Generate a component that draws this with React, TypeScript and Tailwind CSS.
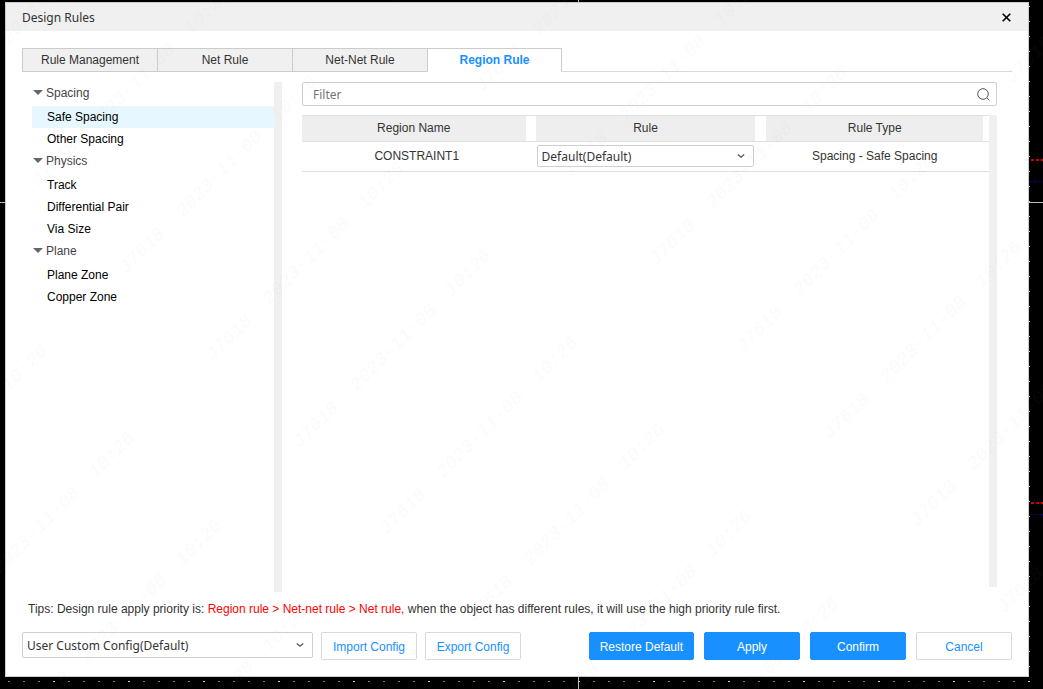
import { useState } from "react";
import type { ReactNode } from "react";
import clsx from "clsx";

const TABS = ["Rule Management", "Net Rule", "Net-Net Rule", "Region Rule"];

const GROUPS = [
  { name: "Spacing", items: ["Safe Spacing", "Other Spacing"] },
  { name: "Physics", items: ["Track", "Differential Pair", "Via Size"] },
  { name: "Plane", items: ["Plane Zone", "Copper Zone"] },
];

const COLUMNS = [
  { title: "Region Name", width: "w-[34%]", pad: "pr-[10px]" },
  { title: "Rule", width: "w-[33.6%]", pad: "pr-[11px]" },
  { title: "Rule Type", width: "w-auto", pad: "pr-[6px]" },
];

const Board = () => (
  <svg className="absolute inset-0 h-full w-full" aria-hidden="true">
    <defs>
      <pattern id="dots" x="8" y="6" width="75" height="15" patternUnits="userSpaceOnUse">
        <rect x="0" y="0" width="2" height="1" fill="#777" />
        <rect x="15" y="0" width="2" height="1" fill="#777" />
        <rect x="30" y="0" width="2" height="1" fill="#777" />
        <rect x="45" y="0" width="2" height="1" fill="#ccc" />
        <rect x="60" y="0" width="2" height="1" fill="#777" />
      </pattern>
    </defs>
    <rect width="100%" height="100%" fill="#000" />
    <rect width="100%" height="100%" fill="url(#dots)" />
    <g fill="none" shapeRendering="crispEdges">
      <path d="M578.5 0V2000M0 202.5H3000" stroke="#bbb" />
      <path d="M1031 160H3000M1031 503H3000" stroke="#d00000" strokeWidth="2" strokeDasharray="3 2" />
      <path d="M1029 181.5H3000M1031 514.5H3000" stroke="#000080" strokeDasharray="3 2" />
    </g>
  </svg>
);

const Watermark = () => (
  <svg className="pointer-events-none absolute inset-0 h-full w-full" aria-hidden="true">
    <defs>
      <pattern
        id="stamp"
        x="-120"
        y="0"
        width="381"
        height="123"
        patternUnits="userSpaceOnUse"
        patternTransform="rotate(-45)"
      >
        <g
          fill="#808080"
          fillOpacity="0.045"
          fontFamily="'Liberation Mono', monospace"
          fontStyle="italic"
          fontSize="19"
          textAnchor="middle"
        >
          <text x="43" y="37">J7618</text>
          <text x="152" y="37">2023-11-08</text>
          <text x="258" y="37">10:26</text>
        </g>
      </pattern>
    </defs>
    <rect width="100%" height="100%" fill="url(#stamp)" />
  </svg>
);

const Chevron = () => (
  <svg
    className="pointer-events-none absolute top-1/2 right-[9px] h-2 w-2 -translate-y-1/2"
    viewBox="0 0 8 8"
    fill="none"
    stroke="#555"
    strokeWidth="1.3"
  >
    <path d="M0.8 2.4 4 5.2 7.2 2.4" />
  </svg>
);

type SelectProps = {
  label: string;
  value: string;
  className: string;
};

const Select = ({ label, value, className }: SelectProps) => (
  <div className={clsx("relative", className)}>
    <select
      aria-label={label}
      className="h-full w-full appearance-none rounded-xs border border-[#d0d0d0] bg-white pt-[2px] pr-6 pl-1 font-['Noto_Sans',sans-serif] text-xs text-[#333]"
    >
      <option>{value}</option>
    </select>
    <Chevron />
  </div>
);

type ButtonProps = {
  children: ReactNode;
  primary?: boolean;
};

const Button = ({ children, primary }: ButtonProps) => (
  <button
    type="button"
    className={clsx(
      "h-7 min-w-24 rounded-xs border px-[10px] pt-[1px] whitespace-nowrap",
      primary
        ? "border-[#1890ff] bg-[#1890ff] font-medium text-white"
        : "border-[#d9d9d9] bg-white text-[#1890ff]"
    )}
  >
    {children}
  </button>
);

const RuleTree = () => {
  const [selected, setSelected] = useState("Safe Spacing");

  return (
    <nav className="flex w-[260px] shrink-0">
      <div className="flex-1 pl-[10px]">
        {GROUPS.map((group) => (
          <section key={group.name}>
            <h2 className="flex h-6 items-center gap-[3px] pb-[3px] pl-[1px] text-[#444]">
              <svg className="h-[5px] w-[10px]" viewBox="0 0 10 5" fill="#666">
                <path d="M0 0H10L5 5Z" />
              </svg>
              {group.name}
            </h2>
            <ul>
              {group.items.map((item) => (
                <li key={item}>
                  <button
                    type="button"
                    onClick={() => setSelected(item)}
                    className={clsx(
                      "block h-[22px] w-full pl-[15px] text-left text-black",
                      selected === item && "bg-[#e6f7ff]"
                    )}
                  >
                    {item}
                  </button>
                </li>
              ))}
            </ul>
          </section>
        ))}
      </div>
      <div className="w-2 bg-[#f0f0f0]" />
    </nav>
  );
};

const RuleTable = () => (
  <div className="flex flex-1">
    <div className="flex-1">
      <table className="w-full table-fixed border-collapse text-center text-[#333]">
        <thead>
          <tr className="border-y border-[#e0e0e0]">
            {COLUMNS.map((column) => (
              <th key={column.title} className={clsx("p-0 font-normal", column.width, column.pad)}>
                <div className="h-[25px] bg-[#eee] leading-6">{column.title}</div>
              </th>
            ))}
          </tr>
        </thead>
        <tbody>
          <tr className="h-[30px] border-b border-[#ddd]">
            <td className="p-0 pr-1 pb-[2px]">CONSTRAINT1</td>
            <td className="p-0 pr-3 pb-[2px] pl-[1px]">
              <Select label="Rule" value="Default(Default)" className="h-[22px] text-left" />
            </td>
            <td className="p-0 pr-[6px] pb-[2px]">Spacing - Safe Spacing</td>
          </tr>
        </tbody>
      </table>
    </div>
    <div className="w-2 bg-[#f0f0f0]" />
  </div>
);

export default function App() {
  const [tab, setTab] = useState("Region Rule");

  return (
    <main className="relative flex min-h-screen flex-col bg-black pt-[2px] pr-[14px] pb-3 pl-[5px] font-['Liberation_Sans',Arial,sans-serif] text-xs">
      <Board />
      <div role="dialog" aria-label="Design Rules" className="relative flex flex-1 flex-col border border-[#ccc] bg-white">
        <header className="flex h-7 items-center justify-between bg-[#f0f0f0] px-4">
          <h1 className="pt-[2px] font-['Noto_Sans',sans-serif] text-[#333]">Design Rules</h1>
          <button type="button" aria-label="Close" className="flex h-5 w-3 items-center justify-center">
            <svg className="h-[9px] w-[9px]" viewBox="0 0 9 9" stroke="#000" strokeWidth="1.6">
              <path d="M0.7 0.7 8.3 8.3M8.3 0.7 0.7 8.3" />
            </svg>
          </button>
        </header>

        <div className="flex flex-1 flex-col px-4 pt-[17px] pb-4">
          <div role="tablist" className="flex h-6">
            {TABS.map((name) => (
              <button
                key={name}
                type="button"
                role="tab"
                aria-selected={tab === name}
                onClick={() => setTab(name)}
                className={clsx(
                  "w-[135px] border-y border-l border-[#ccc] last-of-type:border-r",
                  tab === name ? "border-b-white bg-white font-bold text-[#1890ff]" : "bg-[#f0f0f0] text-[#333]"
                )}
              >
                {name}
              </button>
            ))}
            <div className="flex-1 border-b border-[#d9d9d9]" />
          </div>

          <div className="mt-[10px] flex min-h-[240px] flex-1 gap-5">
            <RuleTree />
            <div className="mr-[15px] mb-[5px] flex flex-1 flex-col gap-[9px]">
              <div className="relative">
                <input
                  type="text"
                  aria-label="Filter"
                  placeholder="Filter"
                  className="block h-6 w-full rounded-xs border border-[#d0d0d0] pt-[1px] pr-8 pl-[10px] font-['Noto_Sans',sans-serif] placeholder:text-[#757575]"
                />
                <svg
                  className="absolute top-[6px] right-[7px] h-[13px] w-[13px]"
                  viewBox="0 0 13 13"
                  fill="none"
                  stroke="#555"
                >
                  <circle cx="6" cy="6" r="5.3" />
                  <path d="M9.8 9.8 12.4 12.4" />
                </svg>
              </div>
              <RuleTable />
            </div>
          </div>

          <p className="mb-[6px] pl-[6px] leading-[34px] text-[#333]">
            Tips: Design rule apply priority is:{" "}
            <span className="text-[#f00]">Region rule &gt; Net-net rule &gt; Net rule,</span> when the object has
            different rules, it will use the high priority rule first.
          </p>

          <footer className="flex flex-wrap items-start justify-between gap-2">
            <div className="flex gap-2">
              <Select label="Config" value="User Custom Config(Default)" className="h-[26px] w-[291px]" />
              <Button>Import Config</Button>
              <Button>Export Config</Button>
            </div>
            <div className="flex gap-[10px]">
              <Button primary>Restore Default</Button>
              <Button primary>Apply</Button>
              <Button primary>Confirm</Button>
              <Button>Cancel</Button>
            </div>
          </footer>
        </div>
      </div>
      <Watermark />
    </main>
  );
}
